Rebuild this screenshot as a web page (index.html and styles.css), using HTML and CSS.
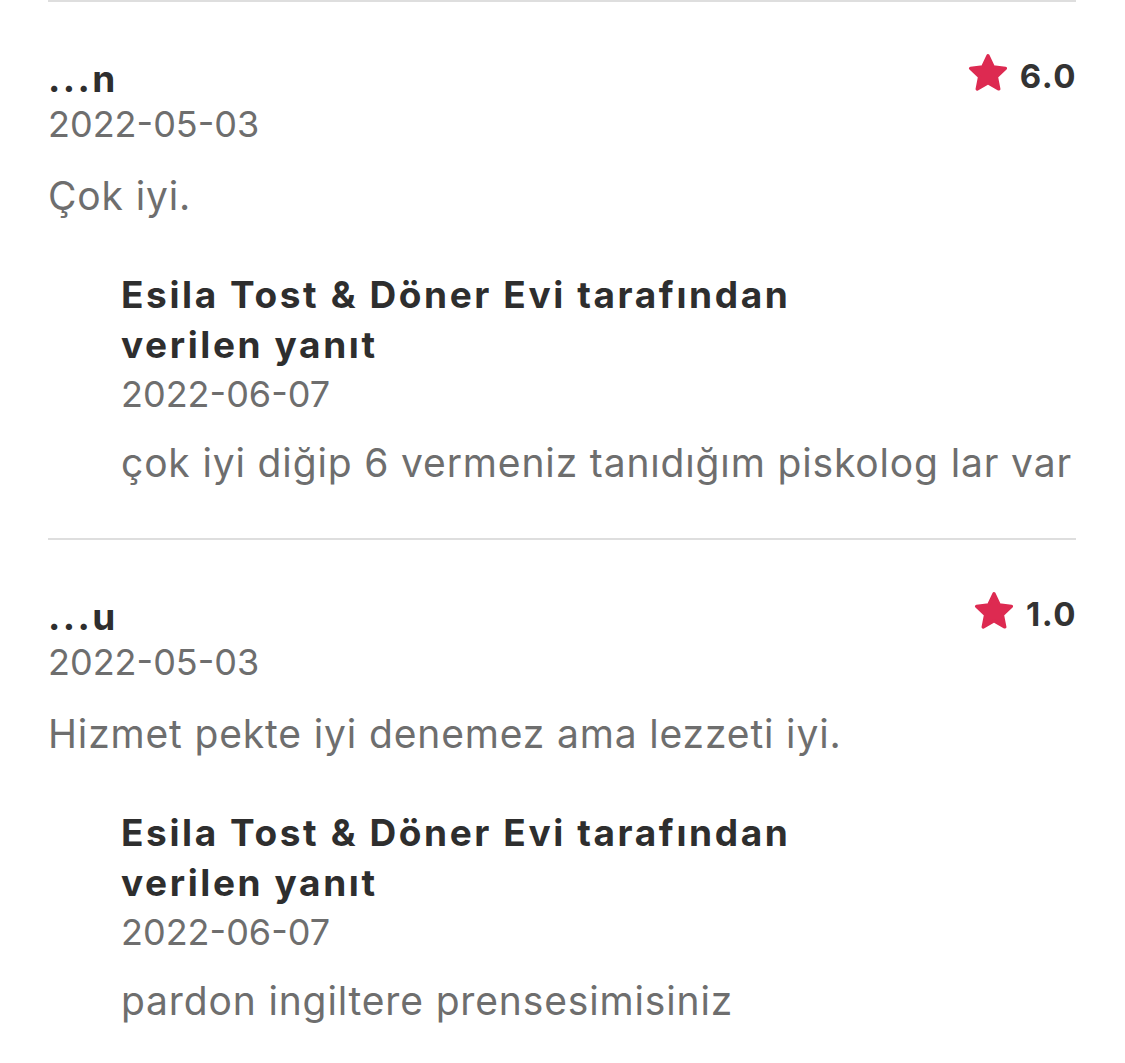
FILE: index.html
```html
<!DOCTYPE html>
<html lang="tr">
<head>
	<meta charset="utf-8">
	<title>Yorumlar</title>
<link rel="stylesheet" href="styles.css">
</head>
<body>
<div class="reviews">
	<!-- first review -->
	<div class="review">
		<div class="review-head">
			<div class="name">...n</div>
			<div class="rating">
				<svg class="star" viewBox="0 0 24 24"><path d="M12 2.6l2.9 6.1 6.6.8-4.9 4.6 1.3 6.6L12 17.4l-5.9 3.3 1.3-6.6-4.9-4.6 6.6-.8z"/></svg>
				<span>6.0</span>
			</div>
		</div>
		<div class="date">2022-05-03</div>
		<p class="text">Çok iyi.</p>

		<div class="reply">
			<div class="reply-title">Esila Tost &amp; Döner Evi tarafından<br>verilen yanıt</div>
			<div class="date">2022-06-07</div>
			<p class="text reply-text">çok iyi diğip 6 vermeniz tanıdığım piskolog lar var</p>
		</div>
	</div>

	<!-- second review -->
	<div class="review">
		<div class="review-head">
			<div class="name">...u</div>
			<div class="rating">
				<svg class="star" viewBox="0 0 24 24"><path d="M12 2.6l2.9 6.1 6.6.8-4.9 4.6 1.3 6.6L12 17.4l-5.9 3.3 1.3-6.6-4.9-4.6 6.6-.8z"/></svg>
				<span>1.0</span>
			</div>
		</div>
		<div class="date">2022-05-03</div>
		<p class="text">Hizmet pekte iyi denemez ama lezzeti iyi.</p>

		<div class="reply">
			<div class="reply-title">Esila Tost &amp; Döner Evi tarafından<br>verilen yanıt</div>
			<div class="date">2022-06-07</div>
			<p class="text reply-text">pardon ingiltere prensesimisiniz</p>
		</div>
	</div>
</div>
</body>
</html>
```

FILE: styles.css
```css
body {
	margin: 0;
	background: #fff;
	font-family: Inter, "Noto Sans", sans-serif;
	color: #333;
}

.reviews {
	padding: 0 49px 0 48px;
}

.review {
	border-top: 2px solid #dedede;
	padding-top: 54px;
	padding-bottom: 52px;
}

.review-head {
	display: flex;
	justify-content: space-between;
	align-items: flex-start;
}

.name {
	font-size: 37px;
	font-weight: 700;
	letter-spacing: 2.4px;
	line-height: 45px;
	color: #2e2e2e;
}

.rating {
	display: flex;
	align-items: center;
	gap: 10px;
	font-size: 33px;
	font-weight: 700;
	letter-spacing: 1.5px;
	line-height: 38px;
	color: #333;
	margin-right: -1px;
}

.star {
	width: 44px;
	height: 44px;
	margin-top: -5px;
}

.star path {
	fill: #dd2a51;
	stroke: #dd2a51;
	stroke-width: 1.8;
	stroke-linejoin: round;
}

.date {
	font-size: 36px;
	line-height: 46px;
	color: #6e6e6e;
}

.text {
	margin: 26px 0 0;
	font-size: 39px;
	letter-spacing: 0.85px;
	line-height: 46px;
	color: #6e6e6e;
}

.reply {
	margin: 51px 0 0 73px;
}

.reply-title {
	font-size: 37px;
	font-weight: 700;
	letter-spacing: 2.6px;
	line-height: 50px;
	color: #2e2e2e;
	margin-bottom: 1px;
}

.reply-text {
	margin-top: 23px;
}
```
